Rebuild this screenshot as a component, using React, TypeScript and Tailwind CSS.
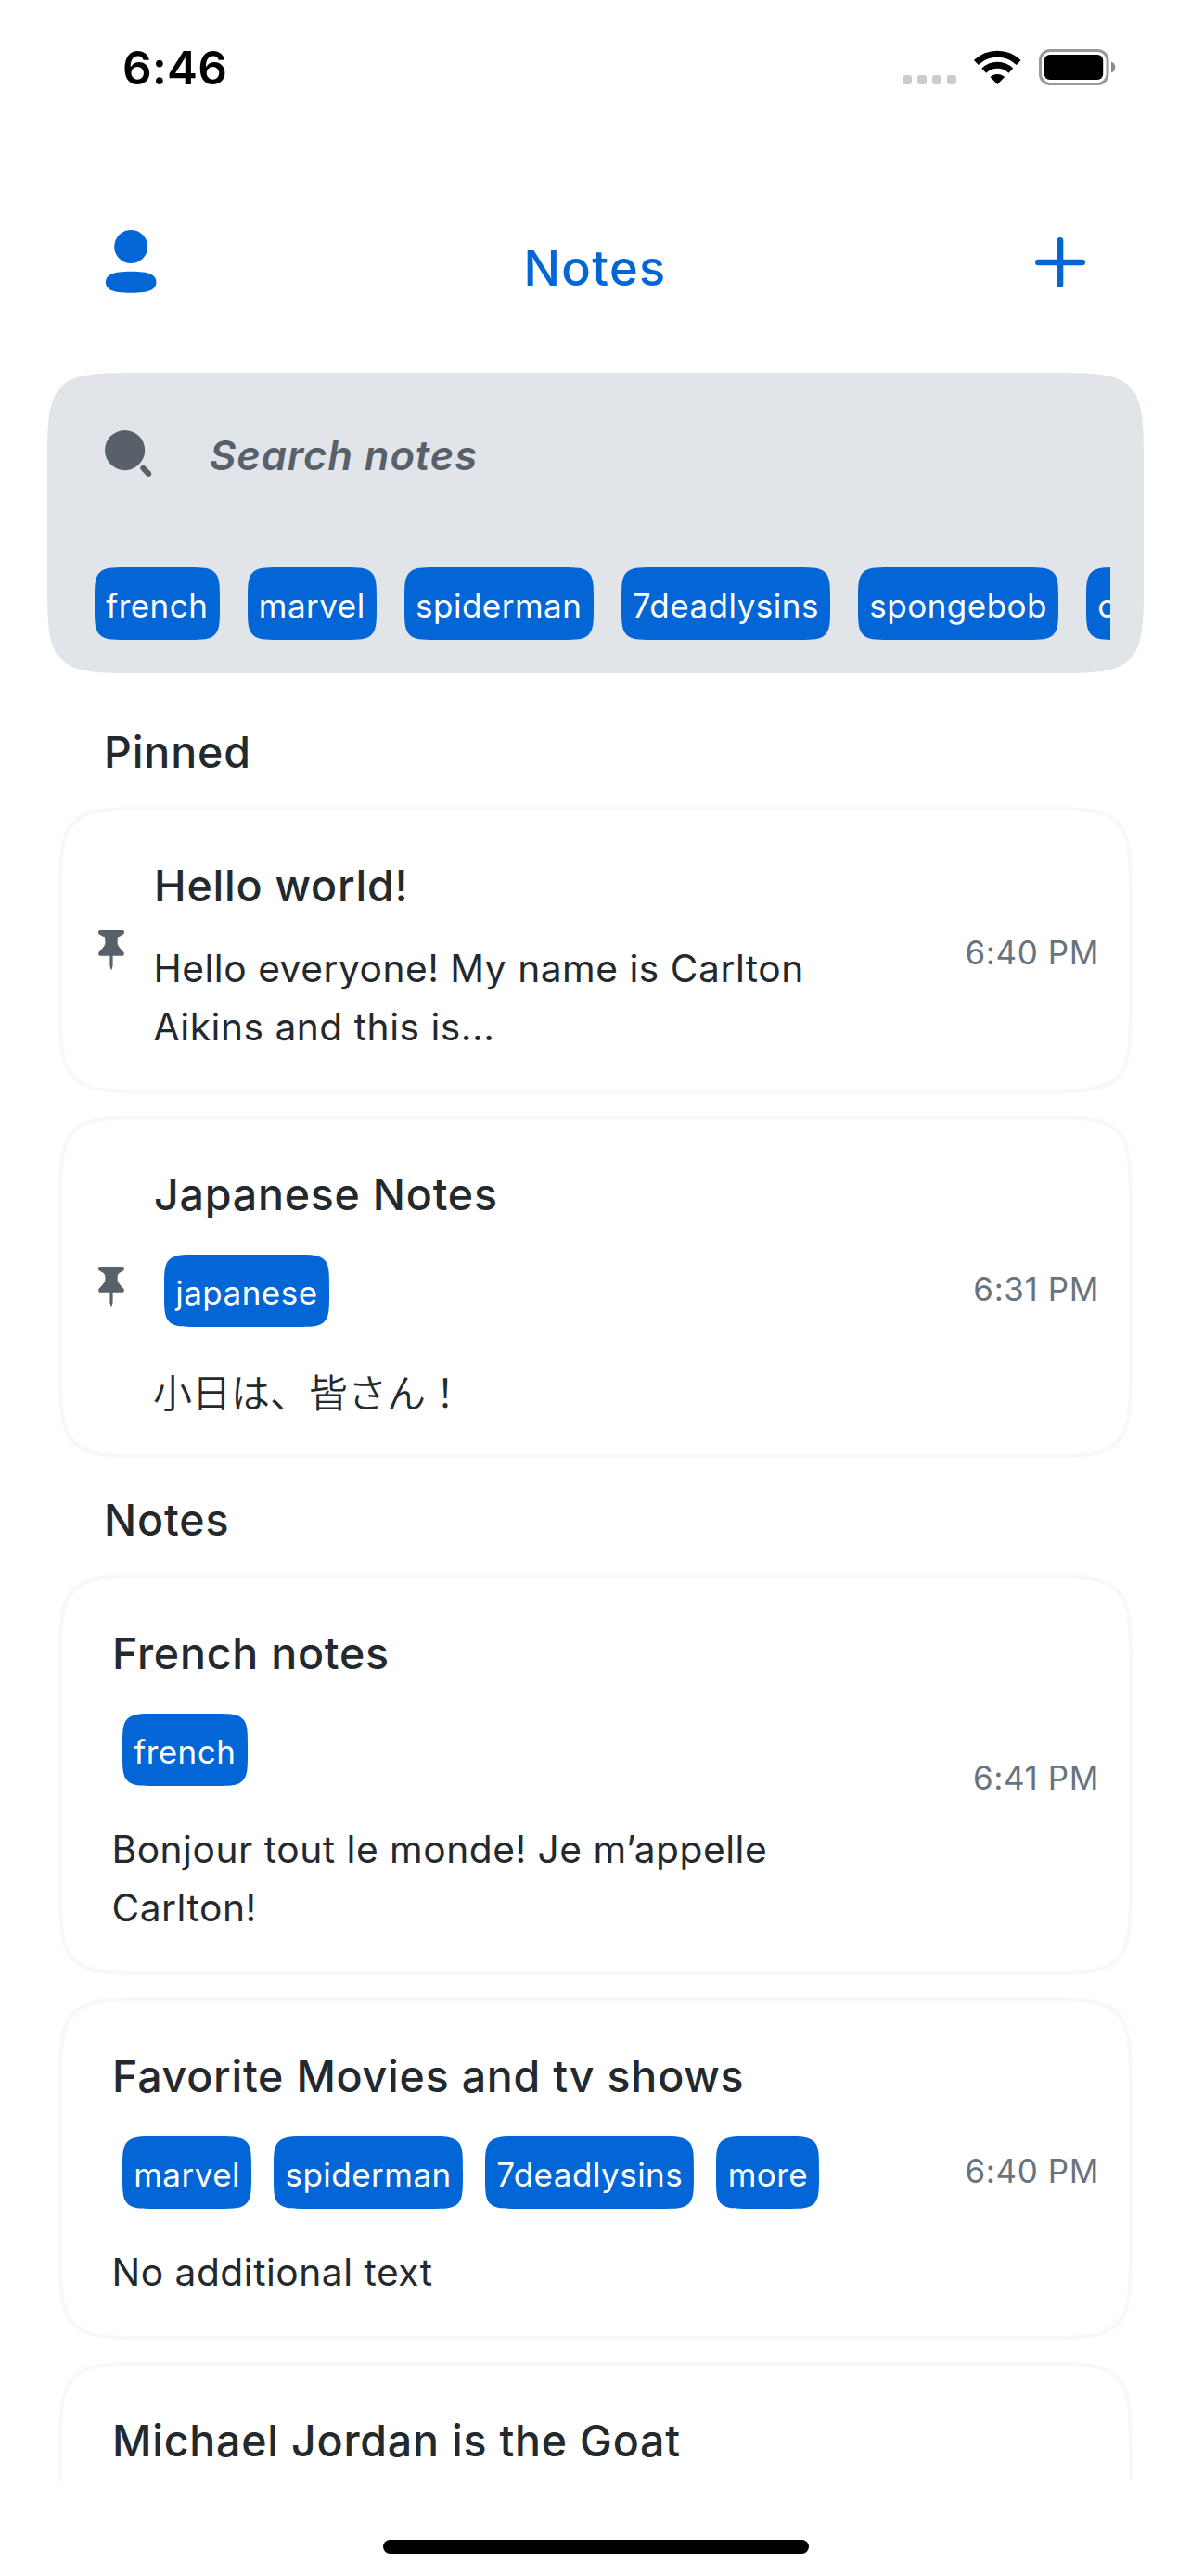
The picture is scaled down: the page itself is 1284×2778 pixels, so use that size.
import type { ReactNode } from "react";

type Note = {
  title: string;
  body: string[];
  time?: string;
  tags?: string[];
  pinned?: boolean;
  height: string;
  lang?: string;
};

const filterTags = ["french", "marvel", "spiderman", "7deadlysins", "spongebob", "o"];

const pinnedNotes: Note[] = [
  {
    title: "Hello world!",
    body: ["Hello everyone! My name is Carlton", "Aikins and this is..."],
    time: "6:40 PM",
    pinned: true,
    height: "h-[309px]",
  },
  {
    title: "Japanese Notes",
    body: ["小日は、皆さん！"],
    time: "6:31 PM",
    tags: ["japanese"],
    pinned: true,
    height: "h-[369px]",
    lang: "ja",
  },
];

const notes: Note[] = [
  {
    title: "French notes",
    body: ["Bonjour tout le monde! Je m’appelle", "Carlton!"],
    time: "6:41 PM",
    tags: ["french"],
    height: "h-[432px]",
  },
  {
    title: "Favorite Movies and tv shows",
    body: ["No additional text"],
    time: "6:40 PM",
    tags: ["marvel", "spiderman", "7deadlysins", "more"],
    height: "h-[369px]",
  },
  {
    title: "Michael Jordan is the Goat",
    body: [],
    height: "h-[369px]",
  },
];

function WifiIcon() {
  return (
    <svg className="h-[38px] w-[51px]" viewBox="0 0 51 38" fill="none" stroke="#000" strokeWidth="7">
      <path d="M2.4 13.4A33 33 0 0 1 48.2 13.4" />
      <path d="M10.8 22.2A20.8 20.8 0 0 1 39.8 22.2" />
      <path d="M25.3 37L17.5 29A11.3 11.3 0 0 1 33.1 29Z" fill="#000" stroke="none" />
    </svg>
  );
}

function BatteryIcon() {
  return (
    <svg className="h-[39px] w-[83px]" viewBox="0 0 83 39">
      <rect x="1.5" y="1.5" width="72.5" height="36" rx="10.5" fill="none" stroke="#999" strokeWidth="3" />
      <rect x="5.8" y="6" width="63.4" height="27" rx="6" fill="#000" />
      <path d="M78 13.5C80.8 14.5 82.3 16.7 82.3 19.5S80.8 24.5 78 25.5Z" fill="#8c8c8c" />
    </svg>
  );
}

function PersonIcon() {
  return (
    <svg className="h-[68px] w-[55px]" viewBox="0 0 55 68" fill="#0366d6">
      <circle cx="27.2" cy="18" r="18" />
      <path d="M0 56.3C0 48.5 7 44.7 27.2 44.7S54.4 48.5 54.4 56.3S47.4 67.8 27.2 67.8S0 64.1 0 56.3Z" />
    </svg>
  );
}

function PlusIcon() {
  return (
    <svg className="h-[54px] w-[54px]" viewBox="0 0 54 54" stroke="#0366d6" strokeWidth="6.6" strokeLinecap="round">
      <path d="M27 3.3V50.7M3.3 27H50.7" />
    </svg>
  );
}

function SearchIcon() {
  return (
    <svg className="-mt-[3px] h-[52px] w-[52px]" viewBox="0 0 52 52" fill="#586069">
      <circle cx="21.6" cy="21.6" r="21.6" />
      <path d="M39 38.7C40.5 37.3 42.3 37.6 43.5 38.7L49.3 44.5C50.6 46 50.6 47.8 49.4 49.1C48 50.4 46.2 50.3 44.9 49L39.2 43C38 41.6 37.9 40 39 38.7Z" />
    </svg>
  );
}

function PinIcon() {
  return (
    <svg className="h-[43px] w-[28px]" viewBox="0 0 28 43" fill="#586069">
      <path d="M2 0H26C27.3 0 28 .9 28 2.2C28 3.6 27.3 4.3 26 5C23.5 6.3 21 7.5 20.8 9.5L20.6 13.5C20.6 16 22 18.2 27.5 24C28.3 25.8 27.5 27.7 25.6 27.7H2.4C.5 27.7-.3 25.8.5 24C6 18.2 7.4 16 7.4 13.5L7.2 9.5C7 7.5 4.5 6.3 2 5C.7 4.3 0 3.6 0 2.2C0 .9.7 0 2 0Z" />
      <path d="M12.4 27H15.6V38.5L14.6 42.3Q14 43.3 13.4 42.3L12.4 38.5Z" />
    </svg>
  );
}

function Tag({ children }: { children: ReactNode }) {
  return (
    <span className="h-[78px] min-w-[111px] shrink-0 rounded-[39px] bg-[#0366d6] px-[12.2px] pt-[2px] text-[35px] leading-[78px] tracking-[0.49px] whitespace-nowrap text-white [corner-shape:superellipse(2.2)]">
      {children}
    </span>
  );
}

function SectionTitle({ children }: { children: ReactNode }) {
  return (
    <h2 className="mb-[23px] ml-[112px] text-[46.5px] leading-[72px] font-medium tracking-[0.9px]">{children}</h2>
  );
}

function NoteCard({ note }: { note: Note }) {
  return (
    <article
      className={`mx-[63px] flex shrink-0 items-center rounded-[120px] border-4 border-[#f6f8fa] [corner-shape:superellipse(2.37)] ${note.height}`}
    >
      {note.pinned && (
        <div className="ml-[39px] w-[59px] shrink-0">
          <PinIcon />
        </div>
      )}
      <div className={`flex flex-1 flex-col self-stretch pt-[45px] ${note.pinned ? "" : "ml-[53px]"}`}>
        <h3 className="ml-px text-[46.5px] leading-[72px] font-medium tracking-[0.78px] whitespace-nowrap">
          {note.title}
        </h3>
        {note.tags && (
          <div className="mt-[29px] ml-3 flex gap-6">
            {note.tags.map((tag) => (
              <Tag key={tag}>{tag}</Tag>
            ))}
          </div>
        )}
        <div className={note.tags ? "mt-[37px]" : "mt-[22px]"} lang={note.lang}>
          {note.body.map((line) => (
            <p
              key={line}
              className={
                note.lang === "ja"
                  ? "font-['Noto_Sans_CJK_JP',sans-serif] text-[42px] leading-[63px] font-[350] whitespace-nowrap"
                  : "pl-[0.5px] text-[40.7px] leading-[63px] tracking-[0.52px] whitespace-nowrap"
              }
            >
              {line}
            </p>
          ))}
        </div>
      </div>
      {note.time && (
        <time className="mr-[32px] pt-[5px] text-[35px] leading-[44px] tracking-[0.6px] text-[#6a737d]">
          {note.time}
        </time>
      )}
    </article>
  );
}

export default function App() {
  return (
    <div className="flex h-[2778px] w-[1284px] flex-col overflow-hidden bg-white font-['Inter',sans-serif] text-[#24292e]">
      <div className="flex h-[146px] shrink-0 items-start justify-between pr-[81px] pl-[132px]">
        <span className="mt-[43px] text-[49.5px] leading-[60px] font-semibold tracking-[0.3px] text-black">6:46</span>
        <div className="mt-[53px] flex items-start">
          <div className="mt-7 mr-[19px] flex gap-[6px]">
            <i className="size-[10px] rounded-[3px] bg-[#ccc]" />
            <i className="size-[10px] rounded-[3px] bg-[#ccc]" />
            <i className="size-[10px] rounded-[3px] bg-[#ccc]" />
            <i className="size-[10px] rounded-[3px] bg-[#ccc]" />
          </div>
          <div className="mt-px mr-[19px]">
            <WifiIcon />
          </div>
          <BatteryIcon />
        </div>
      </div>

      <header className="flex h-[256px] shrink-0 items-start justify-between pr-[114px] pl-[114px]">
        <div className="mt-[102px]">
          <PersonIcon />
        </div>
        <h1 className="mt-[103px] -ml-[2px] text-[52.3px] leading-[80px] font-medium tracking-[1.36px] text-[#0366d6]">
          Notes
        </h1>
        <div className="mt-[110px]">
          <PlusIcon />
        </div>
      </header>

      <section className="mx-[51px] h-[324px] shrink-0 rounded-[120px] bg-[#e1e4e8] pt-[59px] pr-9 pl-[51px] [corner-shape:superellipse(2.37)]">
        <div className="flex h-[60px] items-center pl-[11px]">
          <SearchIcon />
          <span className="mt-px ml-[61px] text-[43.6px] leading-[60px] font-semibold tracking-[0.9px] text-[#586069] italic">
            Search notes
          </span>
        </div>
        <div className="mt-[91px] flex gap-[30px] overflow-hidden">
          {filterTags.map((tag) => (
            <Tag key={tag}>{tag}</Tag>
          ))}
        </div>
      </section>

      <main className="flex h-[1950px] shrink-0 flex-col overflow-hidden pt-[49px]">
        <SectionTitle>Pinned</SectionTitle>
        <div className="flex flex-col gap-6">
          {pinnedNotes.map((note) => (
            <NoteCard key={note.title} note={note} />
          ))}
        </div>
        <div className="mt-[31px]">
          <SectionTitle>Notes</SectionTitle>
        </div>
        <div className="flex flex-col gap-6">
          {notes.map((note) => (
            <NoteCard key={note.title} note={note} />
          ))}
        </div>
      </main>

      <div className="mt-[63px] h-[15px] w-[459px] shrink-0 self-center rounded-full bg-black" />
    </div>
  );
}
